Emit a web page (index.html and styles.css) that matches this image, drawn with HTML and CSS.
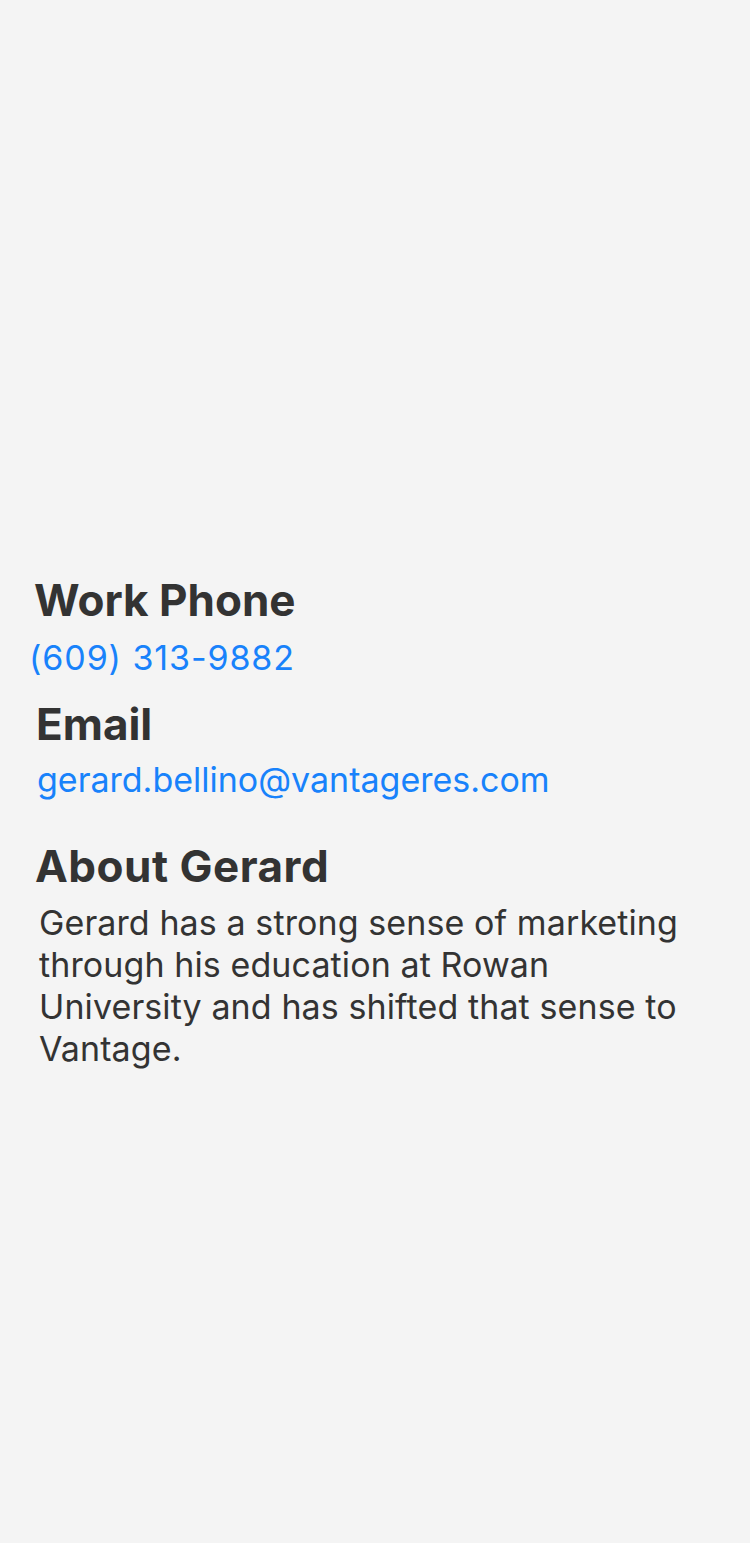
FILE: index.html
```html
<!DOCTYPE html>
<html>
<head>
<meta charset="utf-8">
<link rel="stylesheet" href="styles.css">
</head>
<body>
<main class="profile">
  <section class="field">
    <h2 class="label">Work Phone</h2>
    <a class="value phone" href="#">(609) 313-9882</a>
  </section>
  <section class="field email-field">
    <h2 class="label">Email</h2>
    <a class="value email" href="#">gerard.bellino@vantageres.com</a>
  </section>
  <section class="field about-field">
    <h2 class="label about">About Gerard</h2>
    <p class="bio">Gerard has a strong sense of marketing through his education at Rowan University and has shifted that sense to Vantage.</p>
  </section>
</main>
</body>
</html>
```

FILE: styles.css
```css
html, body {
  margin: 0;
  padding: 0;
  background: #f4f4f4;
}
body {
  width: 750px;
  height: 1543px;
  font-family: Inter, "Noto Sans", sans-serif;
  color: #333333;
}
.profile {
  padding: 574px 40px 0 34px;
  display: flex;
  flex-direction: column;
}
.field {
  display: flex;
  flex-direction: column;
}
.label {
  margin: 0;
  font-size: 44px;
  line-height: 52px;
  font-weight: 700;
  color: #333333;
}
.value {
  display: block;
  font-size: 34px;
  line-height: 40px;
  color: #1882fb;
  text-decoration: none;
}
.phone {
  margin-top: 12px;
  margin-left: -5px;
  letter-spacing: 0.9px;
}
.email-field {
  margin-top: 20px;
  margin-left: 2px;
}
.email {
  margin-top: 10px;
  margin-left: 1px;
}
.about-field {
  margin-top: 40px;
  margin-left: 2px;
}
.about {
  margin-left: -1px;
  letter-spacing: 0.5px;
}
.bio {
  margin: 10px 0 0 3px;
  font-size: 34px;
  line-height: 42px;
  letter-spacing: 0.1px;
  width: 660px;
}
```
